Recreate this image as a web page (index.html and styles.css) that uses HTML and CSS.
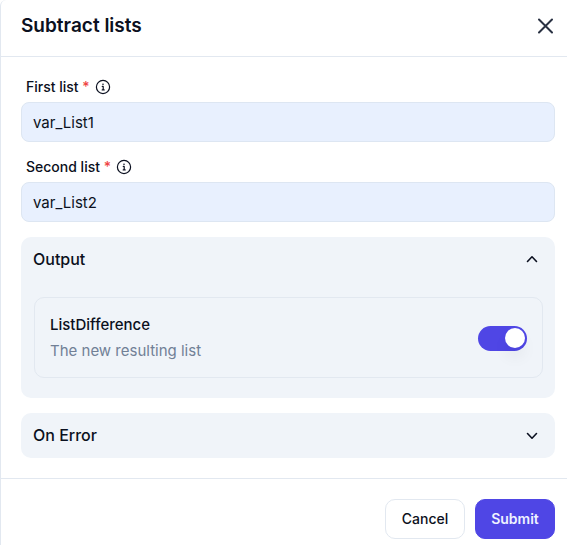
FILE: index.html
```html
<!DOCTYPE html>
<html lang="en">
<head>
<meta charset="utf-8">
<meta name="viewport" content="width=device-width, initial-scale=1">
<title>Subtract lists</title>
<link rel="stylesheet" href="styles.css">
</head>
<body>
<form class="dialog">
  <header class="dialog-header">
    <h1 class="dialog-title">Subtract lists</h1>
    <button class="close" type="button" aria-label="Close">
      <svg width="20" height="20" viewBox="0 0 20 20"><path d="M4 3.500l13 13M17 3.500l-13 13"/></svg>
    </button>
  </header>

  <main class="dialog-body">
    <div class="field">
      <div class="field-label">
        <label for="first">First list <span class="required">*</span></label>
        <svg class="info" width="16" height="16" viewBox="0 0 16 16"><circle cx="8" cy="8" r="6.6"/><path d="M7.300 7.400h.9v3.300M7.200 10.900h2"/><circle class="dot" cx="8" cy="5.300" r=".8"/></svg>
      </div>
      <input class="text-input" id="first" type="text" value="var_List1">
    </div>
    <div class="field">
      <div class="field-label">
        <label for="second">Second list <span class="required">*</span></label>
        <svg class="info" width="16" height="16" viewBox="0 0 16 16"><circle cx="8" cy="8" r="6.6"/><path d="M7.300 7.400h.9v3.300M7.200 10.900h2"/><circle class="dot" cx="8" cy="5.300" r=".8"/></svg>
      </div>
      <input class="text-input" id="second" type="text" value="var_List2">
    </div>

    <section class="panel">
      <button class="panel-toggle" type="button" aria-expanded="true">
        Output
        <svg width="16" height="16" viewBox="0 0 16 16"><path d="M3.500 10.500L8 5.800l4.500 4.700"/></svg>
      </button>
      <div class="panel-content">
        <div class="option">
          <div class="option-text">
            <label class="option-name" for="difference">ListDifference</label>
            <p class="option-hint">The new resulting list</p>
          </div>
          <input class="switch" id="difference" type="checkbox" role="switch" checked>
        </div>
      </div>
    </section>

    <section class="panel">
      <button class="panel-toggle" type="button" aria-expanded="false">
        On Error
        <svg width="16" height="16" viewBox="0 0 16 16"><path d="M3.500 6.500L8 11.200l4.500-4.700"/></svg>
      </button>
    </section>
  </main>

  <footer class="dialog-footer">
    <button class="btn" type="button">Cancel</button>
    <button class="btn btn-primary" type="submit">Submit</button>
  </footer>
</form>
</body>
</html>
```
FILE: styles.css
```css
* {
  box-sizing: border-box;
}

body {
  margin: 0;
  background: #fff;
  color: #0b1020;
  font-family: Inter, "Liberation Sans", sans-serif;
  font-size: 15px;
}

button,
input {
  font: inherit;
  color: inherit;
}

svg {
  display: block;
  flex: none;
  fill: none;
  stroke: currentColor;
  stroke-linecap: round;
  stroke-linejoin: round;
}

.dialog {
  border-left: 1px solid #e2e8f0;
  border-top-left-radius: 6px;
}

.dialog-header {
  display: flex;
  align-items: center;
  justify-content: space-between;
  height: 57px;
  padding: 0 12px 4px 20px;
  border-bottom: 1px solid #e2e8f0;
}

.dialog-title {
  margin: 0;
  font-size: 19px;
  font-weight: 600;
  line-height: 28px;
}

.close {
  display: flex;
  margin: 0;
  padding: 0;
  border: 0;
  background: none;
  color: #293142;
  stroke-width: 2;
}

.dialog-body {
  display: flex;
  flex-direction: column;
  gap: 15px;
  padding: 20px 12px 20px 20px;
}

.field-label {
  display: flex;
  align-items: center;
  gap: 5px;
  height: 20px;
  margin-bottom: 5px;
  padding-left: 5px;
  font-size: 14px;
  font-weight: 500;
  line-height: 20px;
}

.required {
  color: #ef4444;
}

.info {
  stroke-width: 1.2;
}

.info .dot {
  fill: currentColor;
  stroke: none;
}

.text-input {
  display: block;
  width: 100%;
  height: 40px;
  padding: 0 11px;
  border: 1px solid #dde6f2;
  border-radius: 8px;
  background: #e8f0fe;
}

.panel {
  border-radius: 10px;
  background: #f0f4f9;
}

.panel-toggle {
  display: flex;
  align-items: center;
  justify-content: space-between;
  width: 100%;
  height: 45px;
  padding: 0 15px 2px 12px;
  border: 0;
  background: none;
  font-size: 16px;
  font-weight: 500;
  stroke-width: 1.6;
}

.panel-content {
  padding: 15px 12px 20px 13px;
}

.option {
  display: flex;
  align-items: center;
  justify-content: space-between;
  padding: 14px 15px 13px;
  border: 1px solid #e2e8f0;
  border-radius: 10px;
}

.option-name {
  display: block;
  font-weight: 500;
  line-height: 26px;
}

.option-hint {
  margin: 0;
  color: #718096;
  line-height: 26px;
}

.switch {
  display: flex;
  justify-content: flex-end;
  width: 49px;
  height: 25px;
  margin: 0;
  padding: 2px;
  border-radius: 13px;
  background: #4f46e5;
  appearance: none;
}

.switch::before {
  width: 20px;
  height: 20px;
  border-radius: 50%;
  background: #fff;
  box-shadow: 0 10px 15px rgb(0 0 0 / 5%);
  content: "";
}

.switch:not(:checked) {
  justify-content: flex-start;
  background: #cbd5e1;
}

.dialog-footer {
  display: flex;
  justify-content: flex-end;
  gap: 10px;
  padding: 20px 12px 6px;
  border-top: 1px solid #e2e8f0;
}

.btn {
  min-width: 80px;
  height: 40px;
  padding: 0 14px 2px;
  border: 1px solid #e2e8f0;
  border-radius: 10px;
  background: #fff;
  font-size: 14px;
  font-weight: 500;
}

.btn-primary {
  border-color: #4f46e5;
  background: #4f46e5;
  color: #eef2ff;
  font-weight: 600;
}
```
